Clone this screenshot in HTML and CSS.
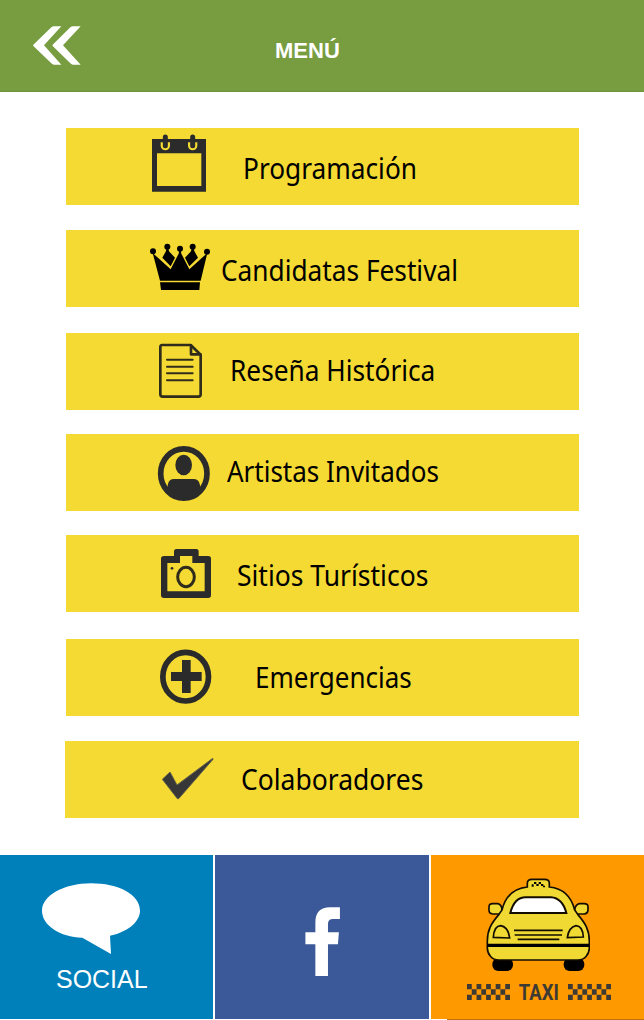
FILE: index.html
```html
<!DOCTYPE html>
<html lang="es">
<head>
  <meta charset="UTF-8" />
  <title>Menú</title>
  <link rel="stylesheet" href="styles.css">
</head>
<body>
  <header>
    <svg class="back" viewBox="96 72 150 126">
      <path d="M162 79 H184 L132 136 L184 194 H162 Q158 194 154 190 L100 138 Q99 136 100 134 L154 82 Q158 79 162 79 Z M219 79 H242 L189 136 L242 194 H219 Q215 194 211 190 L158 138 Q157 136 158 134 L211 82 Q215 79 219 79 Z"/>
    </svg>
    <h1>MENÚ</h1>
  </header>

  <nav class="menu">
    <a class="item programacion">
      <svg class="icon" viewBox="18 24 210 231">
        <path fill-rule="evenodd" d="M36 57H198V215H36Z M51 100V198H184V100Z"/>
        <path class="ring" d="M62 67V77a14 14 0 0 0 28 0V67Z M144 67V77a14 14 0 0 0 28 0V67Z"/>
        <path class="pin" d="M76 51V77 M158 51V77"/>
      </svg>
      <span>Programación</span>
    </a>

    <a class="item candidatas">
      <svg class="icon black" viewBox="18 15 210 231">
        <circle cx="39" cy="79" r="9"/>
        <circle cx="82" cy="65" r="9"/>
        <circle cx="120" cy="71" r="9"/>
        <circle cx="158" cy="65" r="9"/>
        <circle cx="201" cy="80" r="9"/>
        <path d="M80 70H84L88 80L105 98L92 124L67 98L77 80Z M156 70H160L164 80L174 98L148 124L135 98L152 80Z"/>
        <path d="M38 84L92 133L116 86L118 74H122L124 86L148 133L202 84L182 167H60Z M60 172H180L178 195H63Z"/>
      </svg>
      <span>Candidatas Festival</span>
    </a>

    <a class="item resena">
      <svg class="icon line" viewBox="18 9 210 231">
        <path d="M66 45H152L182 74V193Q182 200 175 200H68Q61 200 61 193V52Q61 45 66 45Z"/>
        <path d="M153 46V73H181"/>
        <path d="M81 89H158 M81 110H158 M81 130H158 M81 151H158"/>
      </svg>
      <span>Reseña Histórica</span>
    </a>

    <a class="item artistas">
      <svg class="icon" viewBox="18 12 210 231">
        <ellipse class="rim" cx="131.500" cy="130.500" rx="69.500" ry="74"/>
        <ellipse cx="131" cy="105" rx="25" ry="31"/>
        <path d="M76 176Q84 172 84 162Q87 147 102 147H160Q176 147 179 162Q179 172 187 176A69 74 0 0 1 76 176Z"/>
      </svg>
      <span>Artistas Invitados</span>
    </a>

    <a class="item sitios">
      <svg class="icon" viewBox="18 15 210 231">
        <path fill-rule="evenodd" d="M109 57H169Q176 57 176 65V78H205Q213 78 213 86V196Q213 204 205 204H72Q63 204 63 196V86Q63 78 72 78H102V65Q102 57 109 57Z M120 78V99H82V184H194V99H157V78Z"/>
        <ellipse class="lens" cx="138" cy="141" rx="25" ry="29"/>
        <circle cx="96" cy="115" r="4"/>
      </svg>
      <span>Sitios Turísticos</span>
    </a>

    <a class="item emergencias">
      <svg class="icon" viewBox="18 12 210 231">
        <ellipse class="rim" cx="137" cy="125" rx="68.500" ry="73"/>
        <path d="M126 75H152V111H185V138H152V174H126V138H93V111H126Z"/>
      </svg>
      <span>Emergencias</span>
    </a>

    <a class="item colaboradores">
      <svg class="icon check" viewBox="18 18 210 231">
        <path d="M67 133L90 111L111 150L218 70L219 73L116 191H112Z"/>
      </svg>
      <span>Colaboradores</span>
    </a>
  </nav>

  <footer>
    <a class="tile social">
      <svg class="bubble" viewBox="126 98 294 213">
        <path d="M273 99C354 99 420 132 420 181C420 216 379 246 330 256L333 311L247 262C180 260 126 225 126 181C126 136 192 99 273 99Z"/>
      </svg>
      <span>SOCIAL</span>
    </a>

    <a class="tile facebook">
      <svg class="fb" viewBox="285 170 105 208">
        <path d="M316 378V282H286V246H316V217Q316 171 360 171H390V206H369Q354 206 354 221V246H387L384 282H354V378Z"/>
      </svg>
    </a>

    <a class="tile taxi">
      <svg class="cab" viewBox="183 85 312 282">
        <!-- ruedas -->
        <rect x="202" y="325" width="62" height="39" rx="18"/>
        <rect x="416" y="325" width="62" height="39" rx="18"/>
        <!-- carroceria -->
        <g class="body">
          <path d="M230 193H203Q192 192 192 182V171Q192 162 203 162H218Q230 164 231 181 M449 181Q451 164 464 162H477Q489 162 489 171V182Q488 192 478 193H450"/>
          <path d="M307 112V101Q307 89 321 89H359Q373 89 373 101V112C412 116 438 136 449 181L458 194C482 222 493 241 493 274V296C492 315 479 331 459 331H221C201 331 188 315 187 296V274C187 241 198 222 222 194L231 181C242 136 268 116 307 112Z"/>
          <path d="M205 263Q207 229 227 228Q250 232 254 265Z M475 262Q473 229 453 228Q431 233 427 264Z"/>
          <path class="glass" d="M256 190Q268 143 302 143H378Q412 145 424 190Z"/>
        </g>
        <path d="M187 282H493V292H187Z"/>
        <path class="grill" d="M267 242H413 M269 256H411 M278 269H403"/>
        <path d="M327 97h7v6h-7z M341 97h7v6h-7z M334 103h7v6h-7z M348 103h7v6h-7z M320 104h6v7h-6z M354 108h6v5h-6z"/>
      </svg>
      <div class="sign">
        <svg class="checker" viewBox="0 0 9 3" preserveAspectRatio="none">
          <path d="M0 0h1v1h1v-1h1v1h1v-1h1v1h1v-1h1v1h1v-1h1v1h-1v1h1v1h-1v-1h-1v1h-1v-1h-1v1h-1v-1h-1v1h-1v-1h-1v1h-1v-1h1v-1h-1z M2 1v1h1v-1z M4 1v1h1v-1z M6 1v1h1v-1z"/>
        </svg>
        <span>TAXI</span>
        <svg class="checker" viewBox="0 0 9 3" preserveAspectRatio="none">
          <path d="M0 0h1v1h1v-1h1v1h1v-1h1v1h1v-1h1v1h1v-1h1v1h-1v1h1v1h-1v-1h-1v1h-1v-1h-1v1h-1v-1h-1v1h-1v-1h-1v1h-1v-1h1v-1h-1z M2 1v1h1v-1z M4 1v1h1v-1z M6 1v1h1v-1z"/>
        </svg>
      </div>
    </a>
  </footer>
  <div class="bottom-line"></div>
</body>
</html>
```
FILE: styles.css
```css
* {
  box-sizing: border-box;
}

body {
  margin: 0;
  height: 1020px;
  overflow: hidden;
  display: flex;
  flex-direction: column;
  background-color: #fff;
  color: #000;
  font-family: 'Noto Sans', sans-serif;
}

svg {
  display: block;
  flex-shrink: 0;
}

header {
  display: flex;
  height: 92px;
  padding: 24px 32px;
  background-color: #789d40;
  border-bottom: 1px solid #70943a;
  color: #fff;
}

.back {
  width: 50px;
  height: 42px;
  fill: #fff;
}

h1 {
  margin: 14px 0 0 193px;
  font-family: 'Liberation Sans', sans-serif;
  font-size: 22px;
  line-height: 26px;
}

.menu {
  display: flex;
  flex-direction: column;
  gap: 25px;
  height: 763px;
  padding: 36px 65px 0 66px;
}

.item {
  display: flex;
  height: 77px;
  padding-left: 80px;
  background-color: #f4da32;
}

.item span {
  padding-top: 20px;
  font-size: 29px;
  line-height: 40px;
  white-space: nowrap;
  transform: scaleX(0.905);
  transform-origin: left;
}

.icon {
  width: 70px;
  height: 77px;
  fill: #2b2b2b;
}

.programacion span {
  margin-left: 27px;
}

.candidatas span {
  margin-left: 5px;
}

.resena {
  margin-top: 1px;
}

.resena span {
  margin-left: 14px;
  padding-top: 17px;
}

.artistas {
  margin-top: -1px;
}

.artistas span {
  margin-left: 11px;
  padding-top: 17px;
  transform: scaleX(0.896);
}

.sitios {
  margin-top: -1px;
}

.sitios span {
  margin-left: 21px;
  transform: scaleX(0.913);
}

.emergencias {
  margin-top: 2px;
}

.emergencias span {
  margin-left: 39px;
  padding-top: 18px;
  transform: scaleX(0.896);
}

.colaboradores {
  margin-left: -1px;
  padding-left: 81px;
}

.colaboradores span {
  margin-left: 25px;
  padding-top: 18px;
  transform: scaleX(0.913);
}

.black {
  fill: #000;
}

.ring {
  fill: #f4da32;
}

.pin {
  stroke: #2b2b2b;
  stroke-width: 15;
  stroke-linecap: round;
}

.line {
  fill: none;
  stroke: #2f2c1c;
  stroke-width: 8;
  stroke-linecap: round;
  stroke-linejoin: round;
}

.line path:last-child {
  stroke-width: 6;
}

.lens {
  fill: none;
  stroke: #2f2c1c;
  stroke-width: 9;
}

.rim {
  fill: none;
  stroke: #2b2b2b;
  stroke-width: 17;
}

.check {
  fill: #373737;
  stroke: #62604a;
  stroke-width: 3;
}

footer {
  display: grid;
  grid-template-columns: 213px 214px 213px;
  gap: 2px;
  height: 164px;
}

.tile {
  display: flex;
  flex-direction: column;
}

.social {
  padding: 28px 0 0 42px;
  background-color: #0080ba;
  color: #fff;
}

.bubble {
  width: 98px;
  height: 71px;
  fill: #fff;
}

.social span {
  margin: 10px 0 0 14px;
  font-family: 'Liberation Sans', sans-serif;
  font-size: 26px;
  line-height: 30px;
  transform: scaleX(0.96);
  transform-origin: left;
}

.facebook {
  padding: 52px 0 0 90px;
  background-color: #3b5998;
}

.fb {
  width: 35px;
  height: 69px;
  fill: #fff;
}

.taxi {
  padding: 23px 0 0 55px;
  background-color: #ff9900;
}

.cab {
  width: 104px;
  height: 94px;
}

.body {
  fill: #f0d932;
  stroke: #120d00;
  stroke-width: 5;
}

.body .glass {
  fill: #fff;
  stroke-width: 6;
}

.grill {
  stroke: #120d00;
  stroke-width: 5;
}

.sign {
  display: flex;
  width: 144px;
  height: 16px;
  margin: 12px 0 0 -19px;
  justify-content: space-between;
  align-items: center;
  color: #3d3935;
}

.checker {
  width: 43px;
  height: 16px;
  fill: #3d3935;
}

.sign span {
  font-family: Roboto, sans-serif;
  font-size: 22px;
  font-weight: 700;
  line-height: 16px;
  margin: 2px -6px 0;
  transform: scaleX(0.84);
}

.bottom-line {
  height: 1px;
  margin-left: 447px;
  background-color: #c4700c;
}
```
